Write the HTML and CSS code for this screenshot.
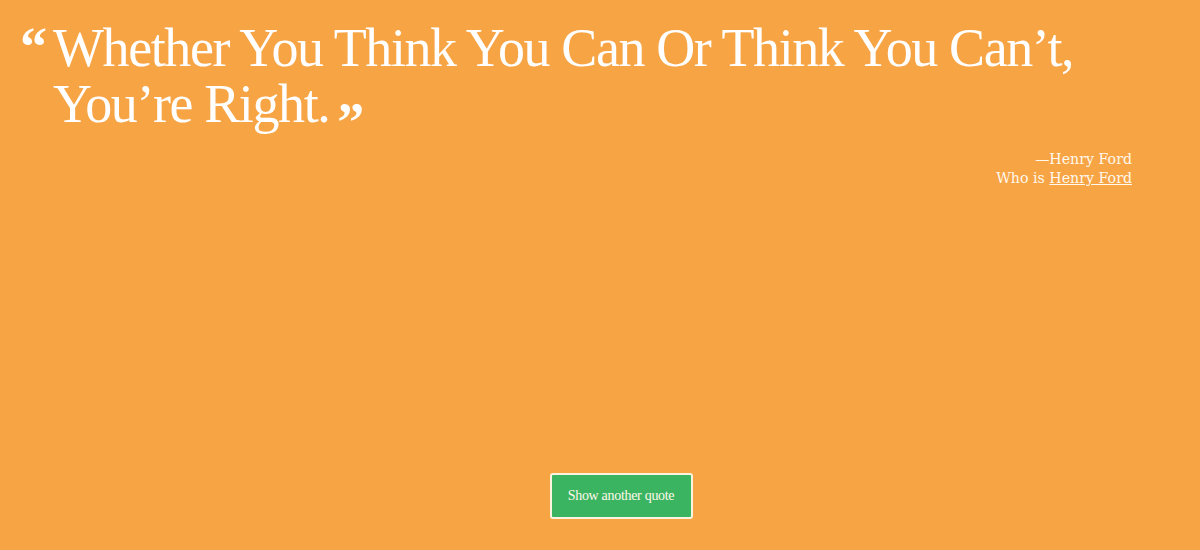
FILE: index.html
```html
<!DOCTYPE html>
<html>
<head>
<meta charset="utf-8">
<link rel="stylesheet" href="styles.css">
</head>
<body>
<div class="page">
  <main class="quote-box">
    <blockquote class="quote">
      <span class="mark open">&ldquo;</span>
      <p class="quote-text">Whether You Think You Can Or Think You Can’t, You’re Right.<span class="mark close">&rdquo;</span></p>
    </blockquote>
    <div class="author">
      <div class="author-name">—Henry Ford</div>
      <div class="author-who">Who is <a href="#" class="author-link">Henry Ford</a></div>
    </div>
  </main>
  <footer class="actions">
    <button class="btn">Show another quote</button>
  </footer>
</div>
</body>
</html>
```
FILE: styles.css
```css
html, body {
  margin: 0;
  padding: 0;
  height: 100%;
}
body {
  background: #f7a445;
  color: #fff;
  font-family: "Liberation Serif", "DejaVu Serif", serif;
}
.page {
  height: 100vh;
  display: flex;
  flex-direction: column;
  justify-content: space-between;
}
.quote-box {
  padding: 20px 68px 0 18px;
}
.quote {
  margin: 0;
  display: flex;
  align-items: flex-start;
}
.mark {
  font-family: "Liberation Serif", serif;
  font-weight: bold;
  font-size: 54px;
  line-height: 36px;
}
.open {
  width: 33px;
  flex: none;
  padding-top: 9px;
  padding-left: 2px;
}
.close {
  display: inline-block;
  vertical-align: top;
  margin-left: 8px;
  padding-top: 28px;
}
.quote-text {
  margin: 0;
  font-size: 54px;
  line-height: 56px;
  letter-spacing: -1.4px;
}
.author {
  text-align: right;
  font-family: "DejaVu Serif", serif;
  font-size: 14.2px;
  line-height: 19px;
  margin-top: 10px;
  color: #fff8ec;
}
.author-link {
  color: inherit;
  text-decoration: underline;
}
.actions {
  display: flex;
  justify-content: center;
  padding: 0 0 31px 42px;
}
.btn {
  width: 143px;
  height: 46px;
  background: #3bb462;
  border: 2px solid #fbf3df;
  border-radius: 3px;
  color: #fff8ea;
  font-family: "Liberation Serif", serif;
  font-size: 14px;
  letter-spacing: -0.3px;
  padding: 0;
}
```
